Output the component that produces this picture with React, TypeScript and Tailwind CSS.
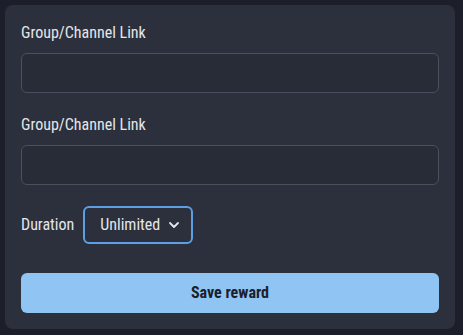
import React, { useState } from 'react';

const ChevronDown: React.FC<{ className?: string }> = ({ className }) => (
  <svg viewBox="0 0 12 8" fill="none" stroke="currentColor" strokeWidth={1.8} strokeLinecap="round" strokeLinejoin="round" className={className}>
    <path d="M2 2l4 4 4-4" />
  </svg>
);

const LinkField: React.FC<{ label: string; value: string; onChange: (v: string) => void }> = ({ label, value, onChange }) => (
  <div className="flex flex-col">
    <label className="text-[16px] leading-6 text-[#e4e6ea] mb-2">{label}</label>
    <input
      value={value}
      onChange={(e) => onChange(e.target.value)}
      className="h-10 w-full rounded-md border border-[#4a505d] bg-[#272c37] px-3 text-[#e4e6ea] outline-none"
    />
  </div>
);

export default function App() {
  const [links, setLinks] = useState(['', '']);

  const setLink = (i: number, v: string) => {
    const next = [...links];
    next[i] = v;
    setLinks(next);
  };

  return (
    <div className="min-h-[335px] w-[463px] bg-[#1c1e29] p-[5px] pr-[8px] font-['Roboto',sans-serif] [font-stretch:condensed]">
      <div className="rounded-lg bg-[#2b303c] p-4">
        <LinkField label="Group/Channel Link" value={links[0]} onChange={(v) => setLink(0, v)} />
        <div className="mt-5">
          <LinkField label="Group/Channel Link" value={links[1]} onChange={(v) => setLink(1, v)} />
        </div>
        <div className="mt-[21px] flex items-center gap-[9px]">
          <span className="text-[16px] text-[#e4e6ea]">Duration</span>
          <button className="flex h-[38px] items-center gap-[8px] rounded-md border-2 border-[#5c9fe4] pl-[15px] pr-[11px] text-[16px] text-[#e4e6ea]">
            Unlimited
            <ChevronDown className="h-[8px] w-[12px]" />
          </button>
        </div>
        <button className="mt-[29px] h-10 w-full rounded-md bg-[#90c4f2] text-[16px] font-bold text-[#1c1f2a]">
          Save reward
        </button>
      </div>
    </div>
  );
}
